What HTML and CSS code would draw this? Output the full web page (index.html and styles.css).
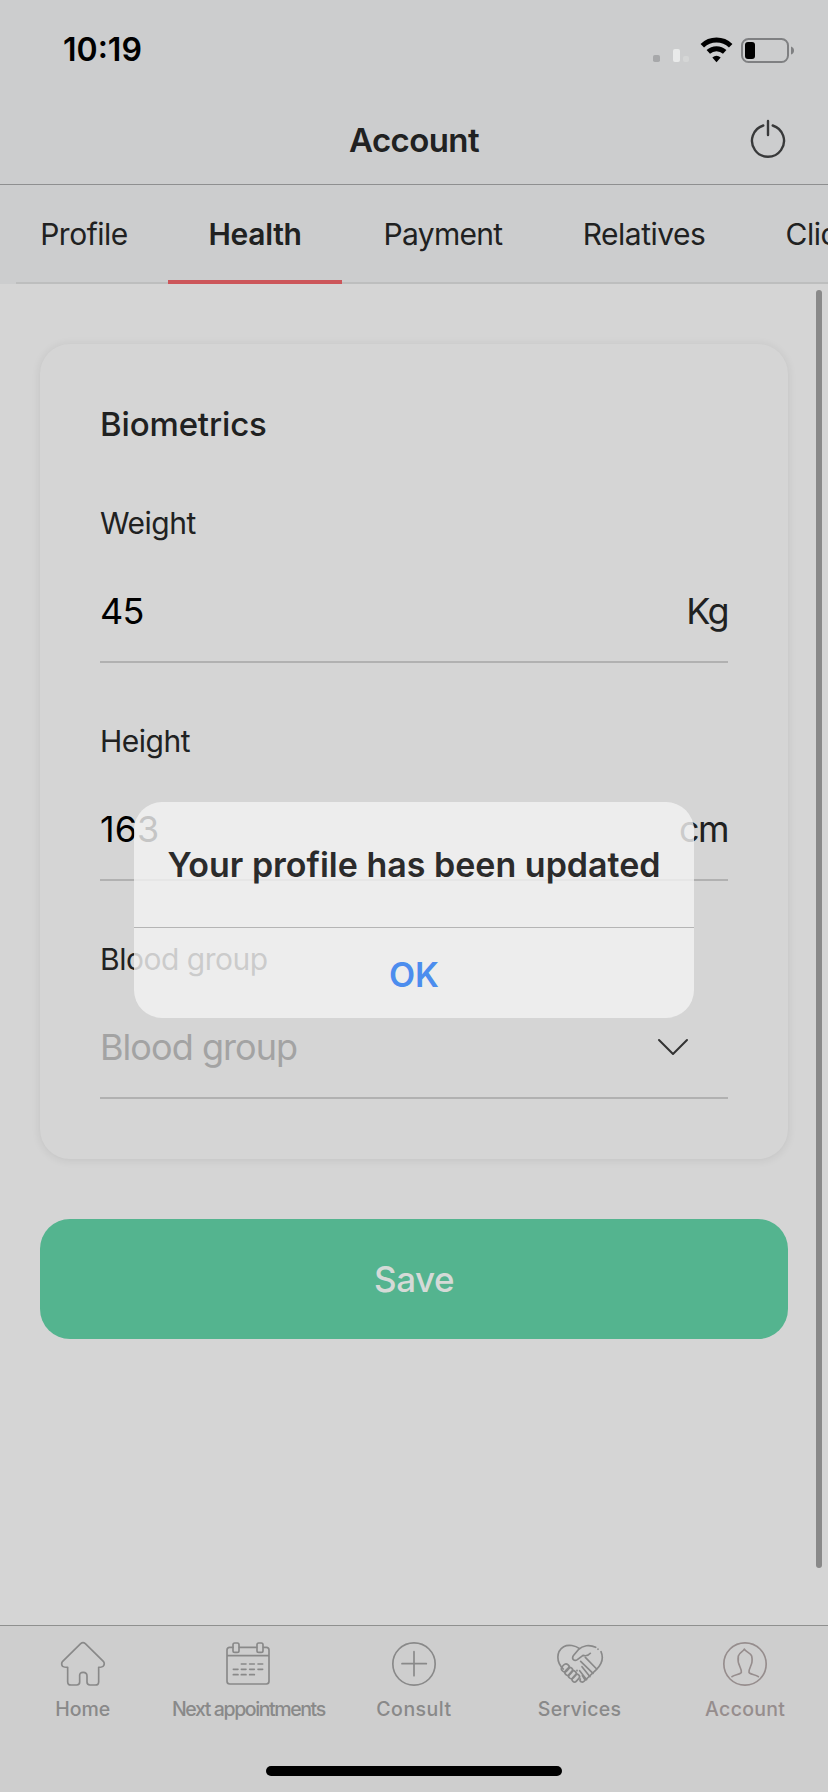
FILE: index.html
```html
<!DOCTYPE html>
<html lang="en">
<head>
<meta charset="utf-8">
<title>Account</title>
<link rel="stylesheet" href="styles.css">
</head>
<body>
<div class="screen">
  <header class="header">
    <div class="status">
      <span class="time">10:19</span>
      <svg class="status-icons" width="144" height="28" viewBox="0 0 144 28">
        <rect x="2" y="19" width="7" height="7" rx="1.8" fill="#a7a8aa"/>
        <rect x="22" y="13" width="7" height="13" rx="2" fill="#e9eaea"/>
        <rect x="32" y="20" width="6" height="6" rx="2" fill="#d5d6d6"/>
        <path d="M51.300 9.700A20.500 20.500 0 0 1 79.700 9.700" fill="none" stroke="#000" stroke-width="5"/>
        <path d="M57.300 15.900A12 12 0 0 1 73.700 15.900" fill="none" stroke="#000" stroke-width="5"/>
        <path d="M65.500 26.200L61.300 21.500Q65.500 17.800 69.700 21.500Z" fill="#000"/>
        <rect x="91" y="3" width="46" height="23" rx="6.500" fill="none" stroke="#7f8082" stroke-width="2"/>
        <rect x="94" y="6" width="10" height="17" rx="3" fill="#000"/>
        <path d="M140 10.500Q143 11.500 143 14.500T140 18.500Z" fill="#7f8082"/>
      </svg>
    </div>
    <div class="nav">
      <h1 class="nav-title">Account</h1>
      <svg class="power" width="40" height="44" viewBox="0 0 40 44" fill="none" stroke="#38393a" stroke-width="2.400" stroke-linecap="round">
        <path d="M15.300 7.500A16 16 0 1 0 24.700 7.500M20 3V17"/>
      </svg>
    </div>
  </header>
  <nav class="tabs">
    <a class="tab tab-profile"><span>Profile</span></a>
    <a class="tab tab-health"><span>Health</span></a>
    <a class="tab tab-payment"><span>Payment</span></a>
    <a class="tab tab-relatives"><span>Relatives</span></a>
    <a class="tab tab-clic"><span>Clic</span></a>
  </nav>
  <main class="content">
    <section class="card">
      <h2 class="card-title"><span>Biometrics</span></h2>
      <div class="field">
        <div class="label"><span>Weight</span></div>
        <div class="value"><span class="amount">45</span><span class="unit">Kg</span></div>
      </div>
      <div class="field">
        <div class="label"><span>Height</span></div>
        <div class="value"><span>163</span><span class="unit">cm</span></div>
      </div>
      <div class="field">
        <div class="label"><span>Blood group</span></div>
        <div class="value">
          <span class="placeholder">Blood group</span>
          <svg class="chevron" width="32" height="20" viewBox="0 0 32 20" fill="none" stroke="#333" stroke-width="2" stroke-linecap="round" stroke-linejoin="round"><path d="M2 3L16 17L30 3"/></svg>
        </div>
      </div>
    </section>
    <button class="save"><span>Save</span></button>
    <div class="scrollbar"></div>
  </main>
  <footer class="tabbar">
    <a class="item">
      <svg width="46" height="46" viewBox="180 93 138 138"><path d="M242 101Q249 95 256 101L310 154Q316 163 309 169Q305 172 296 172V215Q296 225 286 225H270Q261 225 261 216V198Q261 187 249.500 187T239 198V216Q239 225 230 225H213Q203 225 203 215V172Q192 172 188 169Q182 162 188 154Z"/></svg>
      <span class="home">Home</span>
    </a>
    <a class="item">
      <svg width="46" height="46" viewBox="676 93 138 138"><path d="M700 112H690Q682 112 682 120V214Q682 222 690 222H800Q808 222 808 214V120Q808 112 800 112H791M719 112H771M682 137H808"/><rect x="700" y="99" width="18" height="28" rx="5"/><rect x="772" y="99" width="18" height="28" rx="5"/><path d="M725 162h14M750 162h14M775 162h14M701 178h14M725 178h14M750 178h14M775 178h14M701 194h14M725 194h14M750 194h14"/></svg>
      <span class="next">Next appointments</span>
    </a>
    <a class="item">
      <svg width="46" height="46" viewBox="360 93 138 138"><circle cx="429" cy="162" r="63.500"/><path d="M429 125V197M393 161H466"/></svg>
      <span class="consult">Consult</span>
    </a>
    <a class="item">
      <svg width="50" height="46" viewBox="69 93 150 138">
        <path d="M94 177C72 157 72 124 95 110C110 102 130 107 143 116M191 112C173 103 152 106 139 119L125 136C117 147 127 155 136 149L153 136C163 139 170 136 175 130M207 125C215 143 210 162 193 179L157 213C151 220 141 214 145 207"/>
        <path d="M160 142L194 177M146 154L183 190M150 170L174 200M143 182L164 209M151 197L158 208"/>
        <rect x="91" y="161" width="19" height="25" rx="9.500" transform="rotate(42 100 173)"/>
        <rect x="102" y="171" width="17" height="26" rx="8.500" transform="rotate(42 110 184)"/>
        <rect x="113" y="181" width="17" height="26" rx="8.500" transform="rotate(42 121 194)"/>
        <rect x="124" y="191" width="15" height="26" rx="7.500" transform="rotate(42 131 204)"/>
        <path d="M198 117v1M135 181v1"/>
      </svg>
      <span>Services</span>
    </a>
    <a class="item account">
      <svg width="46" height="46" viewBox="576 93 138 138"><circle cx="645" cy="162" r="63.500"/><path d="M606 200C614 193 633 193 634 187Q635 181 630 171Q622 155 625 138C629 126 639 126 643 117C647 126 660 127 665 138Q669 155 661 171Q656 182 657 187C658 193 677 193 685 200"/></svg>
      <span>Account</span>
    </a>
    <div class="home-indicator"></div>
  </footer>
  <div class="alert">
    <div class="alert-title"><span>Your profile has been updated</span></div>
    <div class="alert-action"><span>OK</span></div>
  </div>
</div>
</body>
</html>
```
FILE: styles.css
```css
* { box-sizing: border-box; }
body {
  margin: 0;
  font-family: Inter, "Liberation Sans", sans-serif;
  color: #202121;
  background: #d5d5d5;
}
span { white-space: nowrap; }
.screen {
  position: relative;
  width: 828px;
  height: 1792px;
  overflow: hidden;
  display: flex;
  flex-direction: column;
}
.header {
  height: 185px;
  background: #cccdce;
  border-bottom: 1px solid #8e8f90;
}
.status {
  height: 96px;
  padding: 3px 33px 0 63px;
  display: flex;
  align-items: center;
  justify-content: space-between;
}
.time { font-size: 32px; font-weight: 600; color: #000; letter-spacing: 0; }
.nav {
  height: 88px;
  padding: 0 40px;
  display: grid;
  grid-template-columns: 40px 1fr 40px;
  align-items: center;
}
.nav-title {
  grid-column: 2;
  margin: 0;
  text-align: center;
  font-size: 33px;
  line-height: 40px;
  font-weight: 600;
  letter-spacing: -0.6px;
}
.tabs {
  height: 99px;
  display: flex;
  background: linear-gradient(#bdbebe, #bdbebe) 16px 97px / 100% 2px no-repeat #cccdce;
}
.tab {
  flex: none;
  display: flex;
  justify-content: center;
  align-items: center;
  padding-bottom: 2px;
  font-size: 30px;
  letter-spacing: -0.5px;
}
.tab-profile { width: 168px; }
.tab-health {
  width: 174px;
  padding: 2px 0 0;
  border-bottom: 4px solid #cc565a;
  font-weight: 600;
  letter-spacing: -0.3px;
}
.tab-payment { width: 202px; letter-spacing: -0.7px; }
.tab-relatives { width: 200px; }
.tab-clic { width: 130px; justify-content: flex-start; padding-left: 41.500px; }
.content {
  position: relative;
  height: 1341px;
  padding: 60px 40px 0;
}
.scrollbar {
  position: absolute;
  right: 6px;
  top: 6px;
  width: 6px;
  height: 1278px;
  border-radius: 3px;
  background: #898989;
}
.card {
  height: 815px;
  padding: 60px;
  border-radius: 30px;
  background: #d5d5d5;
  box-shadow: 0 1px 10px rgba(0, 0, 0, 0.09);
}
.card-title {
  margin: 0 0 60px;
  font-size: 33px;
  line-height: 40px;
  font-weight: 500;
  letter-spacing: -0.15px;
}
.field { margin-bottom: 59px; }
.label {
  height: 36px;
  line-height: 38px;
  font-size: 30px;
  letter-spacing: -0.48px;
}
.value {
  height: 123px;
  padding-top: 21px;
  border-bottom: 2px solid #b1b1b1;
  display: flex;
  align-items: center;
  justify-content: space-between;
  font-size: 36px;
  color: #000;
}
.amount { letter-spacing: -0.8px; }
.unit { color: #202121; letter-spacing: -1.5px; }
.placeholder { color: #a3a3a3; letter-spacing: -0.95px; }
.chevron { margin-right: 39px; }
.save {
  display: block;
  width: 748px;
  height: 120px;
  margin-top: 60px;
  border: 0;
  border-radius: 30px;
  background: #54b48f;
  color: #d5dad7;
  font: 500 35px Inter, "Liberation Sans", sans-serif;
  letter-spacing: -0.5px;
}
.tabbar {
  position: relative;
  height: 167px;
  border-top: 1px solid #8f908f;
  background: #cecece;
  display: grid;
  grid-template-columns: repeat(5, minmax(0, 1fr));
  align-items: start;
}
.item {
  display: flex;
  flex-direction: column;
  align-items: center;
  padding-top: 15px;
  color: #898989;
  font-size: 19.500px;
  line-height: 24px;
  font-weight: 500;
  letter-spacing: 0.3px;
}
.item.account { color: #968d8d; }
.item svg { fill: none; stroke: currentColor; stroke-width: 5; stroke-linecap: round; stroke-linejoin: round; }
.item span { margin-top: 10px; }
.item .home { letter-spacing: 0; }
.item .next { letter-spacing: -1.4px; }
.item .consult { letter-spacing: 0.5px; }
.home-indicator {
  position: absolute;
  left: 266px;
  top: 140px;
  width: 296px;
  height: 10px;
  border-radius: 5px;
  background: #000;
}
.alert {
  position: absolute;
  left: 134px;
  top: 802px;
  width: 560px;
  height: 216px;
  border-radius: 28px;
  background: rgba(243, 243, 243, 0.81);
  overflow: hidden;
}
.alert-title {
  height: 126px;
  border-bottom: 1px solid #b5b5b5;
  text-align: center;
  font-size: 34px;
  line-height: 125px;
  font-weight: 600;
  color: #2b2b2b;
}
.alert-action {
  text-align: center;
  font-size: 34px;
  line-height: 94px;
  font-weight: 600;
  color: #4c8dee;
}
```
